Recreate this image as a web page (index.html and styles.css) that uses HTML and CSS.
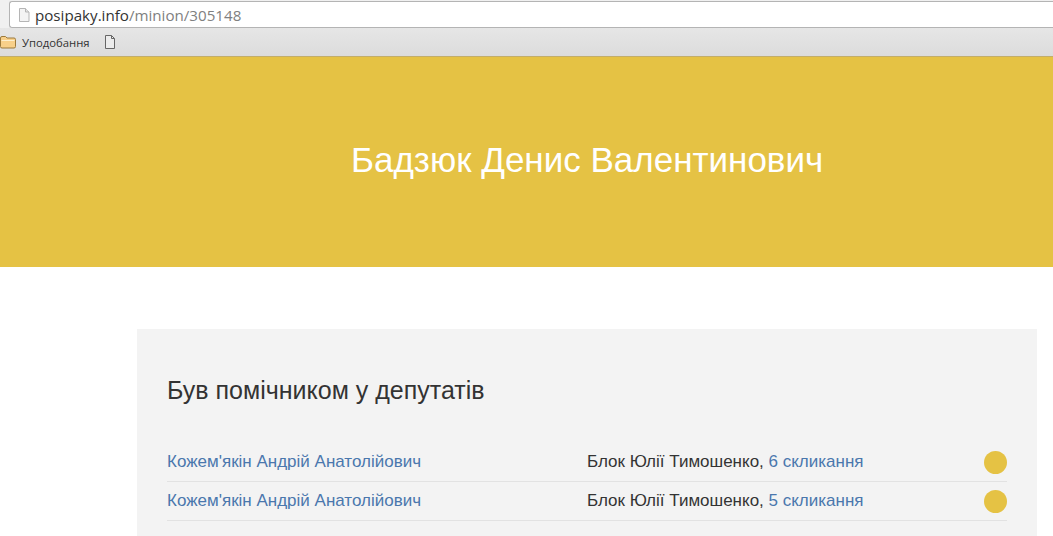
FILE: index.html
```html
<!DOCTYPE html>
<html lang="uk">
<head>
<meta charset="utf-8">
<title>Бадзюк Денис Валентинович</title>
<link rel="stylesheet" href="styles.css">
</head>
<body>
<div class="chrome">
  <div class="urlrow">
    <div class="urlbox">
      <svg class="pageicon" width="14" height="16" viewBox="0 0 14 16"><path d="M2.500 1.500h6l3.500 3.500v9.500h-9.500z" fill="#f4f4f4" stroke="#b5b5b5"/><path d="M8.500 1.500v3.500h3.500" fill="#e4e4e4" stroke="#b5b5b5"/></svg>
      <span class="host">posipaky.info</span><span class="path">/minion/305148</span>
    </div>
  </div>
  <div class="bookmarks">
    <svg class="folder" width="16" height="14" viewBox="0 0 16 14"><path d="M.5 3q0-1.500 1.500-1.500h3.500l1.500 1.500h7q1.500 0 1.500 1.500v7q0 1.500-1.500 1.500h-12q-1.500 0-1.500-1.500z" fill="#f8d08a" stroke="#9c7a3c"/><path d="M1.500 5.500h13" stroke="#fdf0cf"/></svg>
    <span class="bmlabel">Уподобання</span>
    <svg class="bmpage" width="12" height="14" viewBox="0 0 12 14"><path d="M1.500.5h6l3 3v10h-9z" fill="#ececec" stroke="#666"/><path d="M7.500.5v3h3" fill="none" stroke="#666"/></svg>
  </div>
</div>
<header class="hero"><h1>Бадзюк Денис Валентинович</h1></header>
<main class="panel">
  <h2>Був помічником у депутатів</h2>
  <div class="row">
    <a class="name" href="#">Кожем'якін Андрій Анатолійович</a>
    <span class="faction">Блок Юлії Тимошенко, <a href="#">6 скликання</a></span>
    <span class="dot"></span>
  </div>
  <div class="row">
    <a class="name" href="#">Кожем'якін Андрій Анатолійович</a>
    <span class="faction">Блок Юлії Тимошенко, <a href="#">5 скликання</a></span>
    <span class="dot"></span>
  </div>
</main>
</body>
</html>
```
FILE: styles.css
```css
* { box-sizing: border-box; }
html, body { margin: 0; padding: 0; height: 536px; overflow: hidden; background: #fff; }
body { font-family: "Liberation Sans", Arial, sans-serif; color: #333; }
a { color: #4a77ad; text-decoration: none; }

.chrome { height: 57px; background: #dedede; }
.urlrow { height: 28px; padding: 1px 0 0 9px; background: #f0f0f0; }
.urlbox {
  height: 27px;
  display: flex;
  align-items: center;
  padding-left: 7px;
  background: #fff;
  border: 1px solid #b4b4b4;
  border-right: 0;
  border-radius: 3px 0 0 3px;
  font-family: "Open Sans", sans-serif;
  font-size: 15.150px;
}
.pageicon { margin-right: 4px; flex: none; }
.host { color: #333; }
.path { color: #808080; }
.bookmarks {
  height: 29px;
  display: flex;
  align-items: center;
  padding: 0;
  background: linear-gradient(#e6e6e6, #dcdcdc);
  border-bottom: 1px solid #c2ad6b;
  font-family: "Open Sans", sans-serif;
  font-size: 11.300px;
  color: #333;
}
.folder { flex: none; margin-right: 6px; }
.bmlabel { margin-right: 14px; }
.bmpage { flex: none; }

.hero {
  height: 210px;
  background: #e5c244;
  padding: 83px 0 0 351px;
}
.hero h1 {
  margin: 0;
  font-size: 35px;
  line-height: 40px;
  font-weight: 400;
  color: #fff;
}

.panel {
  margin: 62px 16px 0 137px;
  padding: 47px 30px 0;
  height: 207px;
  background: #f3f3f3;
}
.panel h2 {
  margin: 0 0 39px;
  font-size: 25px;
  line-height: 28px;
  font-weight: 400;
  color: #333;
}
.row {
  height: 39px;
  display: flex;
  align-items: center;
  border-bottom: 1px solid #e2e2e2;
  font-size: 17px;
}
.name { width: 420px; flex: none; }
.faction { flex: 1; color: #333; }
.dot {
  width: 23px;
  height: 23px;
  flex: none;
  border-radius: 50%;
  background: #e5c244;
  margin-top: 1px;
}
```
